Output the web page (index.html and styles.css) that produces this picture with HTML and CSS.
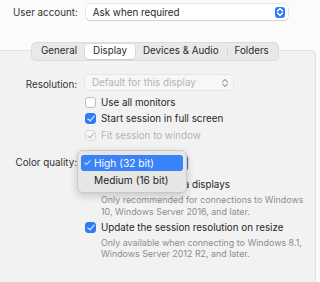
FILE: index.html
```html
<!DOCTYPE html>
<html lang="en">
<head>
    <meta charset="UTF-8">
    <title>Display settings</title>
    <link rel="stylesheet" href="styles.css">
</head>
<body>
    <div class="account-row">
        <span class="row-label">User account:</span>
        <div class="popup popup-wide">
            <span>Ask when required</span>
            <span class="stepper stepper-blue">
                <svg width="8" height="10" viewBox="0 0 8 10"><path d="M1.5 4 L4 1.5 L6.5 4 M1.5 6 L4 8.5 L6.5 6" fill="none" stroke="#fff" stroke-width="1.4" stroke-linecap="round" stroke-linejoin="round"/></svg>
            </span>
        </div>
    </div>

    <div class="panel">
        <div class="tabs">
            <span class="tab">General</span>
            <span class="tab active">Display</span>
            <span class="tab">Devices &amp; Audio</span>
            <span class="tab">Folders</span>
        </div>

        <div class="form">
            <span class="row-label">Resolution:</span>
            <div class="popup popup-disabled">
                <span>Default for this display</span>
                <span class="stepper">
                    <svg width="8" height="10" viewBox="0 0 8 10"><path d="M1.5 4 L4 1.5 L6.5 4 M1.5 6 L4 8.5 L6.5 6" fill="none" stroke="#a8a8a8" stroke-width="1.1" stroke-linecap="round" stroke-linejoin="round"/></svg>
                </span>
            </div>

            <span></span>
            <label class="check"><span class="box"></span>Use all monitors</label>

            <span></span>
            <label class="check"><span class="box on"></span>Start session in full screen</label>

            <span></span>
            <label class="check disabled"><span class="box off-check"></span>Fit session to window</label>

            <span class="row-label quality-label">Color quality:</span>
            <div class="quality-cell">
                <div class="popup popup-quality"></div>
                <div class="menu">
                    <div class="menu-item selected"><span class="tick">✓</span>High (32 bit)</div>
                    <div class="menu-item"><span class="tick"></span>Medium (16 bit)</div>
                </div>
            </div>

            <span></span>
            <div class="option">
                <label class="check"><span class="box"></span>Optimize for Retina displays</label>
                <p class="hint">Only recommended for connections to Windows 10, Windows Server 2016, and later.</p>
            </div>

            <span></span>
            <div class="option option-last">
                <label class="check"><span class="box on"></span>Update the session resolution on resize</label>
                <p class="hint">Only available when connecting to Windows 8.1, Windows Server 2012 R2, and later.</p>
            </div>
        </div>
    </div>
</body>
</html>
```

FILE: styles.css
```css
body {
    margin: 0;
    width: 320px;
    height: 282px;
    overflow: hidden;
    background: #fbfbfb;
    font-family: "Inter", "Liberation Sans", sans-serif;
    font-size: 9.8px;
    color: #262626;
}

.account-row {
    display: flex;
    align-items: center;
    gap: 8px;
    padding: 4px 0 0 13px;
}

.row-label {
    color: #333;
    text-align: right;
}

.popup {
    display: flex;
    align-items: center;
    justify-content: space-between;
    box-sizing: border-box;
    height: 16px;
    padding: 0 3px 0 7px;
    background: #fff;
    border-radius: 4px;
    box-shadow: 0 0 0 0.5px rgba(0, 0, 0, 0.15), 0 1px 1px rgba(0, 0, 0, 0.1);
}

.popup-wide {
    width: 202px;
}

.stepper {
    display: flex;
    align-items: center;
    justify-content: center;
    width: 10px;
    height: 11px;
}

.stepper-blue {
    background: #2f7cf6;
    border-radius: 3px;
}

.panel {
    margin: 30px 4px 0 -1px;
    height: 240px;
    background: #f2f2f2;
    border: 1px solid #e2e2e2;
    border-radius: 0 5px 0 0;
}

.tabs {
    display: flex;
    width: fit-content;
    margin: -9px 0 0 31px;
    padding: 1px;
    background: #e9e9e9;
    border: 1px solid #dcdcdc;
    border-radius: 5px;
}

.tab {
    padding: 1px 8px 2px;
    line-height: 12px;
    color: #2b2b2b;
    border-radius: 4px;
    position: relative;
}

.tab + .tab::before {
    content: "";
    position: absolute;
    left: 0;
    top: 3px;
    bottom: 3px;
    border-left: 1px solid #d6d6d6;
}

.tab.active {
    background: #fff;
    box-shadow: 0 0 0 0.5px rgba(0, 0, 0, 0.12), 0 1px 1px rgba(0, 0, 0, 0.08);
}

.tab.active::before,
.tab.active + .tab::before {
    display: none;
}

.form {
    display: grid;
    grid-template-columns: 77px 1fr;
    column-gap: 8px;
    align-items: center;
    padding-top: 14px;
}

.popup-disabled {
    width: 148px;
    height: 15px;
    color: #b4b4b4;
    background: #f7f7f7;
    box-shadow: 0 0 0 0.5px rgba(0, 0, 0, 0.1);
    margin-bottom: 4px;
}

.check {
    display: flex;
    align-items: center;
    gap: 5px;
    height: 16.5px;
    white-space: nowrap;
}

.box {
    box-sizing: border-box;
    width: 11px;
    height: 11px;
    border-radius: 3px;
    background: #fff;
    border: 1px solid #bdbdbd;
    position: relative;
    flex: none;
}

.box.on {
    background: #2f7cf6;
    border-color: #2f7cf6;
}

.box.on::after,
.box.off-check::after {
    content: "";
    position: absolute;
    left: 3px;
    top: 0px;
    width: 3px;
    height: 6px;
    border: solid #fff;
    border-width: 0 1.6px 1.6px 0;
    transform: rotate(40deg);
}

.box.off-check {
    background: #f6f6f6;
    border-color: #dadada;
}

.box.off-check::after {
    border-color: #b5b5b5;
    border-width: 0 1.2px 1.2px 0;
}

.check.disabled {
    color: #b4b4b4;
}

.quality-label {
    margin-top: 11px;
}

.quality-cell {
    position: relative;
    height: 16px;
    margin-top: 11px;
}

.popup-quality {
    width: 103px;
    height: 16px;
    background: #2f7cf6;
}

.menu {
    position: absolute;
    left: -8px;
    top: -5px;
    width: 110px;
    padding: 4px 3px;
    box-sizing: border-box;
    background: #e6e6e6;
    border: 1px solid #c9c9c9;
    border-radius: 6px;
    box-shadow: 0 3px 8px rgba(0, 0, 0, 0.18);
    z-index: 2;
}

.menu-item {
    display: flex;
    align-items: center;
    height: 16px;
    padding: 0 3px 0 2px;
    border-radius: 3px;
    font-size: 10.2px;
    color: #222;
}

.menu-item.selected {
    background: #3a82f7;
    color: #fff;
    margin-bottom: 1px;
}

.tick {
    width: 11px;
    font-size: 9.5px;
}

.option {
    display: flex;
    flex-direction: column;
    margin-top: 6px;
}

.option-last {
    margin-top: 2px;
}

.hint {
    margin: 1px 0 0 16px;
    font-size: 8.9px;
    line-height: 11.5px;
    color: #8e8e8e;
    max-width: 205px;
}
```
